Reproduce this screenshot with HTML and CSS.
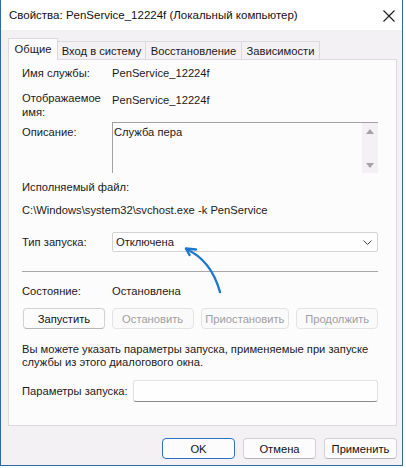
FILE: index.html
```html
<!DOCTYPE html>
<html lang="ru">
<head>
<meta charset="utf-8">
<title>Свойства: PenService_12224f</title>
<link rel="stylesheet" href="styles.css">
</head>
<body>
<div class="window">
  <div class="titlebar">
    <span class="title">Свойства: PenService_12224f (Локальный компьютер)</span>
    <svg class="close" width="12" height="12" viewBox="0 0 12 12"><path d="M0.5 0.5 L11.5 11.5 M11.5 0.5 L0.5 11.5" stroke="#1a1a1a" stroke-width="1.1" fill="none"/></svg>
  </div>
  <div class="content">
    <div class="tabs">
      <div class="tab active t1">Общие</div>
      <div class="tab t2">Вход в систему</div>
      <div class="tab t3">Восстановление</div>
      <div class="tab t4">Зависимости</div>
    </div>
    <div class="panel">
      <div class="row r1"><span class="lbl">Имя службы:</span><span class="val">PenService_12224f</span></div>
      <div class="row r2"><span class="lbl">Отображаемое<br>имя:</span><span class="val val2">PenService_12224f</span></div>
      <div class="row r3"><span class="lbl lbl3">Описание:</span>
        <div class="textarea">
          <span class="ta-text">Служба пера</span>
          <div class="scrollbar">
            <svg width="8" height="5" viewBox="0 0 8 5"><path d="M0 5 L4 0 L8 5 Z" fill="#a3a3a3"/></svg>
            <svg width="8" height="5" viewBox="0 0 8 5"><path d="M0 0 L4 5 L8 0 Z" fill="#a3a3a3"/></svg>
          </div>
        </div>
      </div>
      <div class="line r4">Исполняемый файл:</div>
      <div class="line r5">C:\Windows\system32\svchost.exe -k PenService</div>
      <div class="row r6"><span class="lbl">Тип запуска:</span>
        <div class="select"><span>Отключена</span>
          <svg width="9" height="5" viewBox="0 0 9 5"><path d="M0.5 0.5 L4.5 4.5 L8.5 0.5" stroke="#444" stroke-width="1" fill="none"/></svg>
        </div>
      </div>
      <div class="sep"></div>
      <div class="row r7"><span class="lbl">Состояние:</span><span class="val">Остановлена</span></div>
      <div class="btnrow">
        <div class="btn w82">Запустить</div>
        <div class="btn w82 disabled">Остановить</div>
        <div class="btn w89 disabled">Приостановить</div>
        <div class="btn w82 disabled">Продолжить</div>
      </div>
      <p class="para">Вы можете указать параметры запуска, применяемые при запуске<br>службы из этого диалогового окна.</p>
      <div class="row r10"><span class="lbl lbl10">Параметры запуска:</span><div class="input"></div></div>
    </div>
    <div class="footer">
      <div class="btn fbtn ok">OK</div>
      <div class="btn fbtn">Отмена</div>
      <div class="btn fbtn">Применить</div>
    </div>
  </div>
  <svg class="arrow" width="60" height="60" viewBox="0 0 60 60">
    <path d="M40 53 Q31 21 6 10" stroke="#1f78cf" stroke-width="2.4" fill="none" stroke-linecap="round"/>
    <path d="M16 10.5 L6 9.5 L9.5 16" stroke="#1f78cf" stroke-width="2.4" fill="none" stroke-linecap="round" stroke-linejoin="round"/>
  </svg>
</div>
</body>
</html>
```

FILE: styles.css
```css
* { box-sizing: border-box; }
html, body { margin: 0; padding: 0; background: #ffffff; }
body {
  font-family: "Liberation Sans", Arial, sans-serif;
  font-size: 11.2px;
  color: #1a1a1a;
}
.window {
  position: relative;
  width: 403px;
  height: 466px;
  background: #f3f1f3;
  border: 1px solid #2d6aa5;
  border-top: none;
}
.titlebar {
  height: 30px;
  background: #ffffff;
  display: flex;
  align-items: center;
  justify-content: space-between;
  padding: 0 7px 0 8px;
}
.title { font-size: 11.5px; color: #111; }
.close { display: block; margin-top: 1px; }

.content { padding: 0 5px 0 7px; }
.tabs {
  height: 29px;
  display: flex;
  align-items: flex-end;
  position: relative;
  z-index: 1;
}
.tab {
  height: 18px;
  border: 1px solid #dcdadc;
  border-bottom: none;
  background: #f3f1f3;
  display: flex;
  align-items: center;
  justify-content: center;
  margin-left: -1px;
  padding-top: 1px;
}
.tab.active {
  height: 22px;
  background: #fdfcfd;
  margin-left: 0;
  margin-bottom: -1px;
  padding-top: 0;
  padding-bottom: 2px;
}
.t1 { width: 50px; }
.t2 { width: 89px; }
.t3 { width: 97px; }
.t4 { width: 79px; }

.panel {
  height: 367px;
  background: #fdfcfd;
  border: 1px solid #dcdadc;
  padding: 0 18px 0 13px;
}
.row { display: flex; line-height: 14px; }
.lbl { width: 90px; flex: none; }
.r1 { margin-top: 6px; }
.r2 { margin-top: 11px; }
.val2 { padding-top: 2px; }
.r3 { margin-top: 3px; }
.lbl3 { padding-top: 3px; }
.textarea {
  flex: 1;
  height: 51px;
  position: relative;
  border-top: 1px solid #a3a1a3;
  border-left: 1px solid #a3a1a3;
  background: #fdfcfd;
  padding: 2px 0 0 1px;
}
.ta-text { display: block; }
.scrollbar {
  position: absolute;
  right: 0;
  top: 0;
  bottom: 0;
  width: 16px;
  background: #f3f1f3;
  display: flex;
  flex-direction: column;
  justify-content: space-between;
  align-items: center;
  padding: 6px 0 5px;
}
.scrollbar svg { display: block; }
.line { line-height: 14px; }
.r4 { margin-top: 7px; }
.r5 { margin-top: 9px; }
.r6 { margin-top: 15px; align-items: center; }
.select {
  flex: 1;
  height: 20px;
  border: 1px solid #d4d2d4;
  border-radius: 2px;
  background: #fefefe;
  display: flex;
  align-items: center;
  justify-content: space-between;
  padding: 0 5px 0 3px;
}
.select svg { display: block; }
.sep { margin-top: 19px; height: 1px; background: #a9a7a9; }
.r7 { margin-top: 12px; }
.btnrow { margin-top: 10px; display: flex; gap: 7px; padding-left: 1px; }
.btn {
  height: 21px;
  border: 1px solid #d3d1d3;
  border-bottom-color: #b7b5b7;
  border-radius: 4px;
  background: #fdfcfd;
  display: flex;
  align-items: center;
  justify-content: center;
  color: #111;
}
.btn.disabled {
  color: #a09ea0;
  border-color: #e4e2e4;
  background: #fbfafb;
}
.w82 { width: 82px; }
.w89 { width: 89px; }
.para { margin: 14px 0 0; line-height: 13px; }
.r10 { margin-top: 11px; align-items: center; }
.lbl10 { width: 111px; }
.input {
  flex: 1;
  height: 22px;
  border: 1px solid #e2e0e2;
  border-bottom-color: #8c8a8c;
  border-radius: 3px;
  background: #fefefe;
}
.footer {
  margin-top: 12px;
  display: flex;
  justify-content: flex-end;
  gap: 8px;
}
.fbtn { width: 73px; height: 21px; }
.ok { border: 1px solid #2a73c0; }
.arrow { position: absolute; left: 179px; top: 239px; }
```
